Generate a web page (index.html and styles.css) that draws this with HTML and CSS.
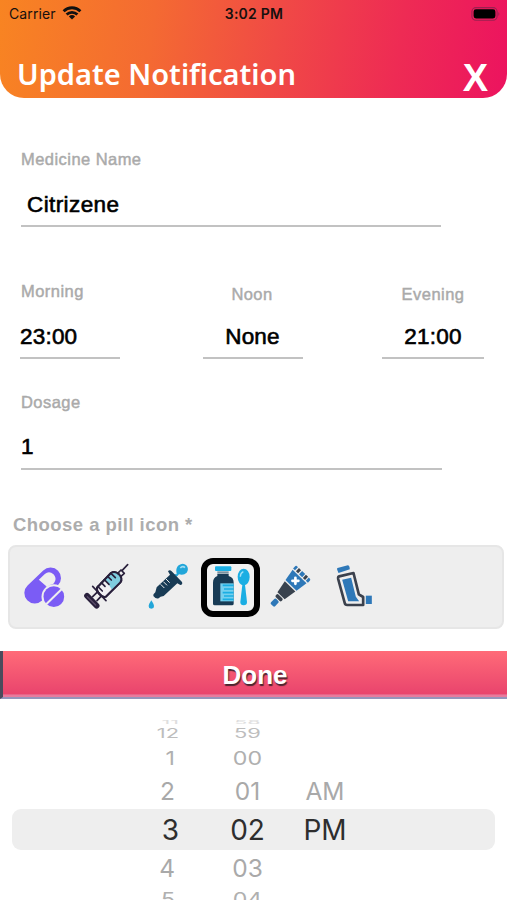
FILE: index.html
```html
<!DOCTYPE html>
<html lang="en">
<head>
<meta charset="utf-8">
<title>Update Notification</title>
<link rel="stylesheet" href="styles.css">
</head>
<body>
<main class="screen">
  <header class="header">
    <div class="status">
      <div class="carrier"><span>Carrier</span>
        <svg width="20" height="14" viewBox="0 0 20 14" fill="none" stroke="#111" stroke-width="2.8"><path d="M1.6 5.2a12 12 0 0 1 16.8 0M4.6 8.6a7.8 7.8 0 0 1 10.8 0"/><path d="M10 13.6l-3.1-3.2a4.5 4.5 0 0 1 6.2 0z" fill="#111" stroke="none"/></svg>
      </div>
      <span class="clock">3:02 PM</span>
      <svg class="battery" width="30" height="14" viewBox="0 0 30 14"><rect x=".9" y=".6" width="25.2" height="12.6" rx="4" fill="none" stroke="#9b2050" stroke-width="1.1"/><rect x="2.6" y="2.3" width="21.8" height="9.2" rx="2.4" fill="#000"/><path d="M27.4 5v4q2-2 0-4" fill="#9b2050"/></svg>
    </div>
    <div class="titlebar"><h1>Update Notification</h1><button class="close">X</button></div>
  </header>

  <section class="field name"><label>Medicine Name</label><div class="value">Citrizene</div></section>

  <section class="times">
    <div class="field time morning"><label>Morning</label><div class="value">23:00</div></div>
    <div class="field time noon"><label>Noon</label><div class="value">None</div></div>
    <div class="field time evening"><label>Evening</label><div class="value">21:00</div></div>
  </section>

  <section class="field dosage"><label>Dosage</label><div class="value">1</div></section>

  <h2 class="choose">Choose a pill icon *</h2>
  <div class="icons">
    <div class="icon"><svg viewBox="43.5 54 177 177">
      <path d="M103 159L150 114" stroke="#7b5cf5" stroke-width="63" stroke-linecap="round"/>
      <path d="M115 119l18-17q13-11 26 1 11 12 3 24l-4 5q-10 1-18 9z" fill="#eee"/>
      <circle cx="160" cy="170" r="37" fill="#eee"/>
      <circle cx="160" cy="170" r="31" fill="#7b5cf5"/>
      <path d="M134 196L187 144" stroke="#eee" stroke-width="6"/>
    </svg></div>
    <div class="icon"><svg viewBox="230 54 177 177" fill="none" stroke="#29203c" stroke-width="6" stroke-linecap="round" stroke-linejoin="round">
      <path d="M290 143l42-44q12-7 24 4 12 12 4 24l-43 43q-9 3-18-6-11-10-9-21z" fill="#f1eff3"/>
      <path d="M315 118l19-20q12-4 22 6 10 11 4 23l-25 22z" fill="#7fcde0" stroke="none"/>
      <path d="M290 143l42-44q12-7 24 4 12 12 4 24l-43 43q-9 3-18-6-11-10-9-21z"/>
      <path d="M292 139l14 14M303 128l11 11M312 119l14 14M322 109l11 11M332 100l13 13M352 100l10-10 10 10-10 9M365 92L382 74M277 139l40 43M290 157l-13 13M302 169l-12 13" stroke-width="5"/>
      <path d="M260 167l29 30" stroke-width="17"/><path d="M261 170l25 25" stroke="#594b68" stroke-width="4"/>
    </svg></div>
    <div class="icon"><svg viewBox="417 54 177 177">
      <path d="M530 103q-4-19 6-27 13-9 23 0 9 11 1 22-9 9-23 5l-7 7-8-8z" fill="#22a6d9"/>
      <path d="M541 84q7-8 14-1" stroke="#a1dcf1" stroke-width="5" fill="none"/>
      <path d="M504 94q5-6 11 0l31 32q3 8-5 9l-9-5-41 38q-11 1-15 7-8 3-16-7-2-5 6-11l4-15 40-38z" fill="#183b55"/>
      <path d="M482 133l11 11M490 125l11 11M498 117l11 11" stroke="#eee" stroke-width="3"/>
      <path d="M454 181q17 25 0 25t0-25" fill="#22a6d9"/>
    </svg></div>
    <div class="icon selected"><svg viewBox="42 63 159 159">
      <rect x="75" y="79" width="49" height="14" rx="3" fill="#1baee3"/><path d="M82 94h34v7H82z" fill="#78919f"/>
      <path d="M82 102h34v6q15 4 15 20v63q0 5-5 5H74q-5 0-5-5v-63q0-15 13-20z" fill="#183b55"/>
      <path d="M91 130h40v54H91z" fill="#75d0ef"/><path d="M98 136h33M102 147h29M98 158h33M102 168h29M98 178h33" stroke="#1baee3" stroke-width="5"/>
      <ellipse cx="161" cy="111" rx="18" ry="25" fill="#1baee3"/><path d="M157 134h8l6 52q0 10-10 10t-10-10z" fill="#1baee3"/><path d="M151 110q0-11 9-15" stroke="#a5e2f7" stroke-width="4" fill="none"/>
    </svg></div>
    <div class="icon"><svg viewBox="220 54 177 177">
      <g transform="translate(254 188) rotate(-46)">
        <rect x="-10" y="-8" width="22" height="17" rx="4" fill="#2e78b8"/>
        <rect x="15" y="-12" width="11" height="24" rx="4" fill="#38424e"/>
        <path d="M29-15L68-22V22L29 15z" fill="#38424e"/>
        <path d="M72-23L109-29V29L72 23z" fill="#2e78b8"/>
        <path d="M113-31h8q5 0 5 5v3h-13zM113-6h13v13h-13zM113 22h13v4q0 5-5 5h-8z" fill="#2e78b8"/>
        <path d="M113-19h13v9h-13zM113 10h13v9h-13z" fill="#38424e"/>
        <g transform="rotate(46 91 0)"><path d="M82 0h18M91-9v18" stroke="#fff" stroke-width="8" stroke-linecap="round"/></g>
      </g>
    </svg></div>
    <div class="icon"><svg viewBox="406.5 54 177 177">
      <path d="M441 84l31-8q4 0 5 5l1 7-34 11-4-10q-1-4 1-5z" fill="#2e78b8"/>
      <path d="M446 109l43-10 16 64 13 8v24h-48q-6 0-7-5l-20-73q-1-7 3-8z" fill="#eee" stroke="#3b414d" stroke-width="8" stroke-linejoin="round"/>
      <path d="M455 119l27-6 14 57 10 14h-33z" fill="#2e78b8"/>
      <path d="M526 167h18v25h-18z" fill="#2e78b8"/>
    </svg></div>
  </div>

  <button class="done">Done</button>

  <section class="picker">
    <div class="row far"><span>11</span><span>58</span><span></span></div>
    <div class="row r12"><span>12</span><span>59</span><span></span></div>
    <div class="row r1"><span>1</span><span>00</span><span></span></div>
    <div class="row r2"><span>2</span><span>01</span><span>AM</span></div>
    <div class="row current"><span>3</span><span>02</span><span>PM</span></div>
    <div class="row r4"><span>4</span><span>03</span><span></span></div>
    <div class="row r5"><span>5</span><span>04</span><span></span></div>
  </section>
</main>
</body>
</html>
```
FILE: styles.css
```css
* { box-sizing: border-box; }
body { margin: 0; background: #fff; font-family: "Liberation Sans", sans-serif; }
.screen { width: 507px; height: 900px; overflow: hidden; display: flex; flex-direction: column; }
.screen > * { flex-shrink: 0; }
h1, h2 { margin: 0; }
button { border: 0; padding: 0; background: none; font-family: inherit; }

.header { height: 98px; border-radius: 0 0 24px 24px; background: linear-gradient(98deg, #f88422 0%, #f46a32 30%, #f04a45 54%, #ee2b54 78%, #ec135f 100%); }
.status { height: 28px; padding: 0 6px 0 9px; display: grid; grid-template-columns: 1fr auto 1fr; align-items: center; font: 500 14px/28px Inter, sans-serif; color: #16100e; }
.carrier { display: flex; align-items: center; gap: 6px; font-weight: 400; letter-spacing: .1px; }
.carrier svg { margin-top: -2px; }
.clock { font-weight: 600; letter-spacing: .25px; margin-left: -2px; }
.battery { justify-self: end; margin-top: -1px; }
.titlebar { display: flex; justify-content: space-between; align-items: flex-start; height: 70px; padding: 0 19px 0 17px; color: #fff; }
.titlebar h1 { font: 600 29px/40px "Noto Sans", sans-serif; letter-spacing: 0; margin-top: 26px; white-space: nowrap; }
.close { font-size: 38px; font-weight: 700; line-height: 40px; color: #fff; margin-top: 30px; }

.field label { display: block; font-size: 16.5px; line-height: 20px; color: #aaa; -webkit-text-stroke: .45px #aaa; letter-spacing: .45px; }
.value { font-size: 22.5px; line-height: 28px; color: #000; -webkit-text-stroke: .6px #000; border-bottom: 2px solid #c2c2c2; }
.name { width: 420px; margin: 51px 0 0 21px; }
.name .value { height: 47px; padding: 11px 0 0 6px; margin-top: 11px; letter-spacing: .4px; }
.times { display: flex; justify-content: space-between; margin: 55px 23px 0 20px; height: 77px; align-items: flex-end; }
.time { width: 100px; text-align: center; }
.time .value { height: 36px; margin-top: 19px; letter-spacing: .2px; }
.morning, .morning .value { text-align: left; }
.morning .value { margin-top: 22px; }
.morning label { padding-left: 1px; }
.noon { margin-left: 3px; }
.noon label { padding-right: 1px; }
.evening { width: 102px; }
.dosage { width: 421px; margin: 33px 0 0 21px; }
.dosage .value { height: 37px; margin-top: 21px; }
.choose { margin: 43px 0 0 13px; font-size: 18.5px; line-height: 24px; color: #adadad; letter-spacing: .45px; }
.icons { display: flex; gap: 3.2px; align-items: center; margin: 8px 3px 0 8px; height: 84px; padding-left: 4.6px; background: #eee; border: 2px solid #e6e6e6; border-radius: 8px; }
.icon { width: 59px; height: 59px; }
.icon svg { display: block; width: 100%; height: 100%; fill: none; }
.selected { border: 6px solid #000; border-radius: 12px; background: #f1f1f1; padding: 0; }
.selected svg { margin: -3px; width: 53px; height: 53px; }

.done { width: 507px; height: 48px; margin-top: 22px; padding-top: 2px; border-left: 3px solid #4b4b5c; border-bottom: 2px solid #9694bb; background: linear-gradient(#ff6b78, #e9446d 94%, #e77b9d 95%); font-size: 26px; font-weight: 700; line-height: 44px; color: #fff; text-shadow: 1px 1.5px 1px #4b252f; letter-spacing: 0; }

.picker { margin-top: 21px; height: 180px; overflow: hidden; font-family: Inter, sans-serif; color: #a9a9a9; }
.row { display: flex; align-items: center; margin: 0 12px; }
.row span { line-height: 1; text-align: center; white-space: nowrap; }
.row span:nth-child(1) { width: 163px; text-align: right; transform-origin: 100% 50%; }
.row span:nth-child(2) { width: 69px; margin-left: 38px; }
.row span:nth-child(3) { width: 78px; margin-left: 4px; }
.far { height: 5px; font-size: 5px; color: #dedede; }
.far span { transform: scaleX(4.3); }
.r12 { height: 19px; font-size: 12.5px; color: #bdbdbd; }
.row.r12 span:nth-child(1), .row.current span:nth-child(1), .row.far span:nth-child(1) { width: 167px; }
.row.r12 span:nth-child(2), .row.current span:nth-child(2), .row.far span:nth-child(2) { margin-left: 34px; }
.r12 span { transform: scaleX(1.75); }
.r1 { height: 28px; font-size: 19px; color: #b0b0b0; }
.r1 span { transform: scaleX(1.22); }
.r2 { height: 38px; font-size: 24.5px; }
.current { height: 41px; margin-top: -1px; border-radius: 9px; background: #eee; color: #2e2e2e; font-size: 28px; }
.r4 { height: 37px; font-size: 24.5px; }
.r5 { height: 25px; font-size: 19px; color: #b0b0b0; }
.r5 span { transform: scaleX(1.22); }
```
